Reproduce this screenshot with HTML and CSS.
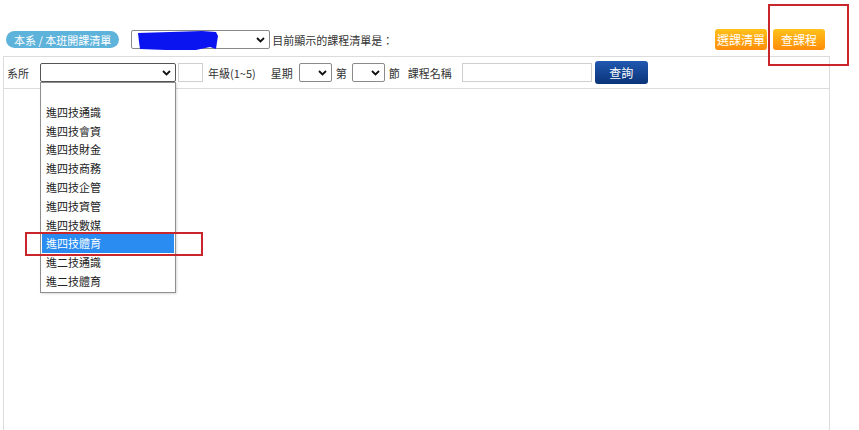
FILE: index.html
```html
<!DOCTYPE html>
<html lang="zh-Hant">
<head>
    <meta charset="UTF-8">
    <title>查課程</title>
    <link rel="stylesheet" href="styles.css">
</head>
<body>
    <div class="page">
        <div class="topbar">
            <span class="pill">本系 / 本班開課清單</span>
            <div class="select select-class">
                <svg class="scribble" width="84" height="21" viewBox="0 0 84 21">
                    <path d="M2 3 L66 1 L80 2 L82 6 L81 12 L80 19 L74 17 L60 20 L30 20 L4 19 L3 12 Z" fill="#0a14f0"/>
                </svg>
                <svg class="chev" width="9" height="6" viewBox="0 0 9 6"><path d="M1 1 L4.5 4.5 L8 1" fill="none" stroke="#111" stroke-width="1.8"/></svg>
            </div>
            <span class="note">目前顯示的課程清單是：</span>
            <div class="actions">
                <span class="btn-orange">選課清單</span>
                <span class="btn-orange">查課程</span>
            </div>
        </div>

        <div class="panel">
            <div class="filters">
                <span class="lbl">系所</span>
                <div class="select select-dept open">
                    <svg class="chev" width="9" height="6" viewBox="0 0 9 6"><path d="M1 1 L4.5 4.5 L8 1" fill="none" stroke="#111" stroke-width="1.8"/></svg>
                </div>
                <div class="input input-grade"></div>
                <span class="lbl lbl-grade">年級(1~5)</span>
                <span class="lbl lbl-week">星期</span>
                <div class="select select-small">
                    <svg class="chev" width="9" height="6" viewBox="0 0 9 6"><path d="M1 1 L4.5 4.5 L8 1" fill="none" stroke="#111" stroke-width="1.8"/></svg>
                </div>
                <span class="lbl lbl-no">第</span>
                <div class="select select-small select-period">
                    <svg class="chev" width="9" height="6" viewBox="0 0 9 6"><path d="M1 1 L4.5 4.5 L8 1" fill="none" stroke="#111" stroke-width="1.8"/></svg>
                </div>
                <span class="lbl lbl-no">節</span>
                <span class="lbl lbl-name">課程名稱</span>
                <div class="input input-name"></div>
                <span class="btn-blue">查詢</span>
            </div>
            <div class="results"></div>

            <ul class="dropdown">
                <li></li>
                <li>進四技通識</li>
                <li>進四技會資</li>
                <li>進四技財金</li>
                <li>進四技商務</li>
                <li>進四技企管</li>
                <li>進四技資管</li>
                <li>進四技數媒</li>
                <li class="selected">進四技體育</li>
                <li>進二技通識</li>
                <li>進二技體育</li>
            </ul>
        </div>

        <div class="mark mark-course"></div>
        <div class="mark mark-option"></div>
    </div>
</body>
</html>
```

FILE: styles.css
```css
body {
    margin: 0;
    background: #fff;
    font-family: "Noto Sans CJK TC", "Noto Sans", sans-serif;
    font-size: 11px;
    color: #333;
    overflow: hidden;
}

.page {
    position: relative;
    width: 859px;
    height: 430px;
}

.topbar {
    display: flex;
    align-items: center;
    height: 21px;
    padding: 29px 0 0 6px;
}

.pill {
    display: inline-flex;
    align-items: center;
    height: 17px;
    padding: 0 8px;
    border-radius: 9px;
    background: #5eb3da;
    color: #fff;
    font-size: 11px;
    white-space: nowrap;
}

.select {
    position: relative;
    box-sizing: border-box;
    height: 19px;
    border: 1px solid #8a8a8a;
    border-radius: 2px;
    background: #fff;
}

.select .chev {
    position: absolute;
    right: 4px;
    top: 6px;
}

.select-class {
    width: 139px;
    margin-left: 12px;
}

.scribble {
    position: absolute;
    left: 4px;
    top: -1px;
}

.note {
    margin-left: 2px;
    white-space: nowrap;
}

.actions {
    display: flex;
    gap: 6px;
    margin-left: auto;
    margin-right: 34px;
}

.btn-orange {
    display: inline-flex;
    align-items: center;
    justify-content: center;
    width: 52px;
    height: 21px;
    border-radius: 3px;
    background: linear-gradient(#ffc21a, #ff8c0a);
    color: #fff;
    font-size: 12px;
}

.panel {
    position: relative;
    box-sizing: border-box;
    width: 827px;
    height: 380px;
    margin: 6px 0 0 3px;
    border: 1px solid #dcdcdc;
    border-bottom: none;
}

.filters {
    display: flex;
    align-items: center;
    height: 31px;
    border-bottom: 1px solid #dcdcdc;
}

.lbl {
    white-space: nowrap;
}

.filters > .lbl:first-child {
    margin-left: 3px;
}

.select-dept {
    width: 136px;
    margin-left: 11px;
}

.select-dept.open {
    border-color: #555;
}

.input {
    box-sizing: border-box;
    height: 19px;
    border: 1px solid #cfcfcf;
    background: #fff;
}

.input-grade {
    width: 25px;
    margin-left: 2px;
}

.lbl-grade {
    margin-left: 5px;
}

.lbl-week {
    margin-left: 15px;
}

.select-small {
    width: 33px;
    margin-left: 6px;
}

.lbl-no {
    margin-left: 4px;
}

.select-period {
    margin-left: 5px;
}

.lbl-name {
    margin-left: 8px;
}

.input-name {
    width: 130px;
    margin-left: 10px;
}

.btn-blue {
    display: inline-flex;
    align-items: center;
    justify-content: center;
    width: 53px;
    height: 23px;
    margin-left: 3px;
    border-radius: 3px;
    background: linear-gradient(#2158b0, #0a3478);
    color: #fff;
    font-size: 12px;
}

.dropdown {
    position: absolute;
    left: 36px;
    top: 25px;
    box-sizing: border-box;
    width: 136px;
    margin: 0;
    padding: 1px 1px;
    list-style: none;
    background: #fff;
    border: 1px solid #8f8f8f;
    box-shadow: 1px 1px 2px rgba(0, 0, 0, 0.15);
}

.dropdown li {
    height: 18.8px;
    line-height: 18.8px;
    padding-left: 4px;
    color: #222;
    white-space: nowrap;
}

.dropdown li.selected {
    background: #2a8cf0;
    color: #fff;
}

.mark {
    position: absolute;
    border: 2px solid #c8262b;
}

.mark-course {
    left: 768px;
    top: 4px;
    width: 77px;
    height: 58px;
}

.mark-option {
    left: 25px;
    top: 232px;
    width: 174px;
    height: 20px;
}
```
